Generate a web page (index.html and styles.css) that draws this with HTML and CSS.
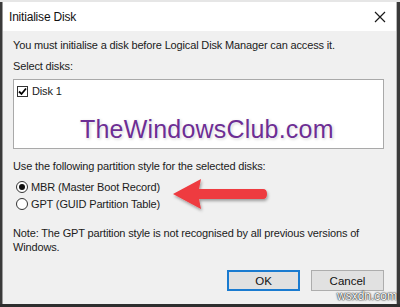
FILE: index.html
```html
<!DOCTYPE html>
<html>
<head>
<meta charset="utf-8">
<link rel="stylesheet" href="styles.css">
</head>
<body>
<div class="screen">
  <div class="topstrip"></div>
  <div class="dialog">
    <div class="titlebar">
      <span class="title">Initialise Disk</span>
      <svg class="close" width="12" height="12" viewBox="0 0 12 12"><path d="M1 1L11 11M11 1L1 11" stroke="#1a1a1a" stroke-width="1.2"/></svg>
    </div>
    <div class="content">
      <p class="line first">You must initialise a disk before Logical Disk Manager can access it.</p>
      <p class="line label">Select disks:</p>
      <div class="listbox">
        <div class="item">
          <span class="checkbox"><svg width="9" height="9" viewBox="0 0 9 9"><path d="M1 4.5L3.5 7L8 1.5" fill="none" stroke="#000" stroke-width="1.8"/></svg></span>
          <span>Disk 1</span>
        </div>
      </div>
      <p class="line label2">Use the following partition style for the selected disks:</p>
      <div class="radios">
        <div class="radio-row"><span class="radio checked"></span><span>MBR (Master Boot Record)</span></div>
        <div class="radio-row"><span class="radio"></span><span>GPT (GUID Partition Table)</span></div>
      </div>
      <p class="note">Note: The GPT partition style is not recognised by all previous versions of Windows.</p>
      <div class="buttons">
        <button class="btn default">OK</button>
        <button class="btn">Cancel</button>
      </div>
    </div>
    <div class="watermark">TheWindowsClub.com</div>
    <svg class="arrow" width="100" height="40" viewBox="0 0 100 40">
      <defs><filter id="sh" x="-10%" y="-20%" width="130%" height="160%"><feDropShadow dx="1" dy="2" stdDeviation="1.5" flood-color="#000" flood-opacity="0.35"/></filter></defs>
      <path d="M2 18 L30 3 L28 13 L92 13 Q96 13 96 18 Q96 23 92 23 L28 23 L30 33 Z" fill="#ee3a3f" filter="url(#sh)"/>
    </svg>
  </div>
  <div class="bottomstrip"></div>
  <div class="site">wsxdn.com</div>
</div>
</body>
</html>
```
FILE: styles.css
```css
* { box-sizing: border-box; }
html, body { margin: 0; padding: 0; }
body {
  width: 400px;
  height: 307px;
  overflow: hidden;
  font-family: "Liberation Sans", Arial, sans-serif;
  font-size: 11px;
  letter-spacing: -0.15px;
  color: #1b1b1b;
  background: #3a3a3a;
}
.screen {
  position: relative;
  width: 400px;
  height: 307px;
  display: flex;
  flex-direction: column;
}
.topstrip {
  height: 2px;
  background: #e6e6e6;
}
.dialog {
  position: relative;
  flex: 1;
  display: flex;
  flex-direction: column;
  margin-left: 2px;
  margin-right: 3px;
  border-left: 1px solid #9a9a9a;
  border-right: 1px solid #b8b8b8;
  background: #f0f0f0;
}
.titlebar {
  height: 29px;
  background: #fff;
  display: flex;
  align-items: center;
  justify-content: space-between;
  padding: 0 10px 0 6px;
}
.title {
  font-size: 12px;
  letter-spacing: -0.2px;
  color: #111;
}
.content {
  flex: 1;
  display: flex;
  flex-direction: column;
  padding: 6px 12px 0 10px;
}
.line { margin: 0; line-height: 16px; white-space: nowrap; }
.first { margin-bottom: 5px; }
.label { margin-bottom: 5px; }
.listbox {
  height: 70px;
  background: #fff;
  border: 1px solid #a9a9a9;
  padding: 3px 3px;
}
.item {
  display: flex;
  align-items: center;
  gap: 4px;
  line-height: 16px;
}
.checkbox {
  width: 11px;
  height: 11px;
  border: 1px solid #333;
  background: #fff;
  display: flex;
  align-items: center;
  justify-content: center;
}
.label2 { margin-top: 9px; margin-bottom: 5px; }
.radios { display: flex; flex-direction: column; gap: 1px; padding-left: 3px; }
.radio-row { display: flex; align-items: center; gap: 3px; line-height: 16px; }
.radio {
  width: 12px;
  height: 12px;
  border-radius: 50%;
  border: 1px solid #333;
  background: #fff;
  display: flex;
  align-items: center;
  justify-content: center;
}
.radio.checked::after {
  content: "";
  width: 6px;
  height: 6px;
  border-radius: 50%;
  background: #111;
}
.note {
  margin: 14px 0 0 0;
  line-height: 14px;
  width: 350px;
}
.buttons {
  display: flex;
  justify-content: flex-end;
  gap: 11px;
  margin-top: 16px;
}
.btn {
  width: 73px;
  height: 21px;
  font-family: inherit;
  font-size: 11.5px;
  color: #111;
  background: #e1e1e1;
  border: 1px solid #adadad;
  padding: 0;
}
.btn.default {
  border: 2px solid #1a7bd0;
}
.watermark {
  position: absolute;
  left: 77px;
  top: 113px;
  font-family: "Liberation Sans", Arial, sans-serif;
  font-size: 25px;
  color: #6d2e94;
  letter-spacing: 0.2px;
  text-shadow: 0 0 2px #fff, 0 0 3px #fff, 1px 1px 3px rgba(0,0,0,0.25);
}
.arrow {
  position: absolute;
  left: 168px;
  top: 174px;
}
.bottomstrip {
  height: 3px;
  background: #2e2e2e;
}
.site {
  position: absolute;
  right: 3px;
  bottom: 4px;
  font-family: "Liberation Sans", Arial, sans-serif;
  font-size: 12px;
  letter-spacing: 0;
  color: #fff;
  text-shadow: 0 0 2px #000, 0 0 1px #000;
}
```
